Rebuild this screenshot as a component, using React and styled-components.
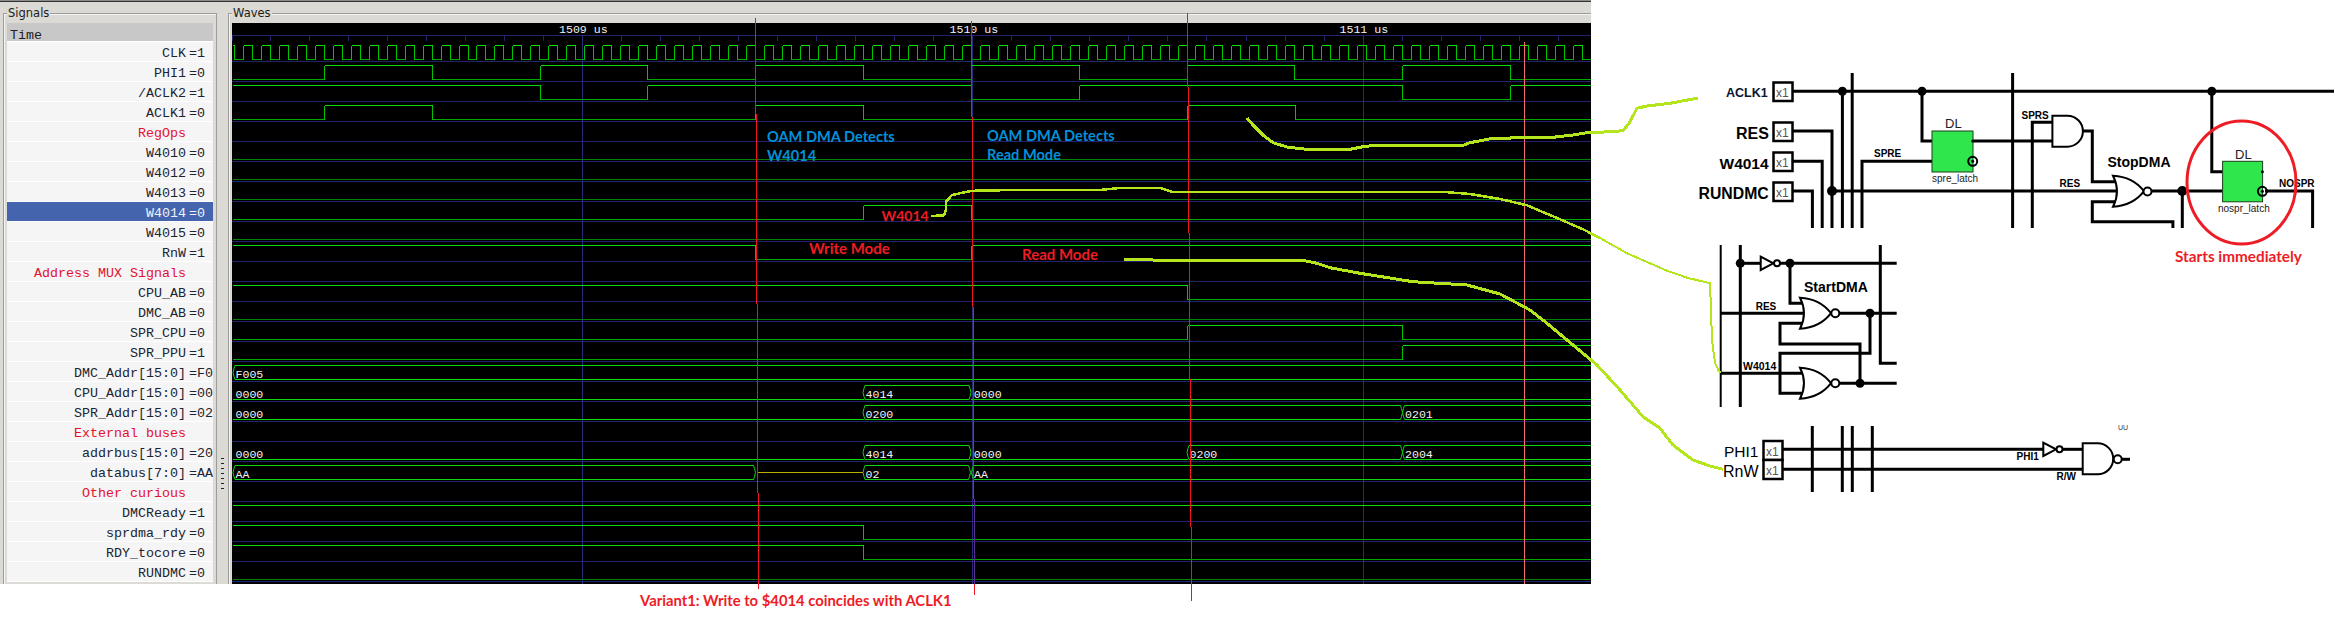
import React from "react";
import styled, { createGlobalStyle } from "styled-components";

const GlobalStyle = createGlobalStyle`
  html, body { margin: 0; padding: 0; background: #fff; }
  body { overflow: hidden; }
`;

/* ---------- signal list ---------- */

const signalRows = [
  { name: "CLK", value: "=1" },
  { name: "PHI1", value: "=0" },
  { name: "/ACLK2", value: "=1" },
  { name: "ACLK1", value: "=0" },
  { name: "RegOps", group: true },
  { name: "W4010", value: "=0" },
  { name: "W4012", value: "=0" },
  { name: "W4013", value: "=0" },
  { name: "W4014", value: "=0", selected: true },
  { name: "W4015", value: "=0" },
  { name: "RnW", value: "=1" },
  { name: "Address MUX Signals", group: true },
  { name: "CPU_AB", value: "=0" },
  { name: "DMC_AB", value: "=0" },
  { name: "SPR_CPU", value: "=0" },
  { name: "SPR_PPU", value: "=1" },
  { name: "DMC_Addr[15:0]", value: "=F0" },
  { name: "CPU_Addr[15:0]", value: "=00" },
  { name: "SPR_Addr[15:0]", value: "=02" },
  { name: "External buses", group: true },
  { name: "addrbus[15:0]", value: "=20" },
  { name: "databus[7:0]", value: "=AA" },
  { name: "Other curious", group: true },
  { name: "DMCReady", value: "=1" },
  { name: "sprdma_rdy", value: "=0" },
  { name: "RDY_tocore", value: "=0" },
  { name: "RUNDMC", value: "=0" },
];

/* ---------- wave data, x in page pixels ---------- */

const CANVAS_LEFT = 232;
const CANVAS_RIGHT = 1591;
const rises = [324.3, 540, 755.7, 971.4, 1187.1, 1402.8];
const falls = rises.map((x) => x + 107.85);

const clockEdges = [234.3];
for (let k = 0; k < 75; k++) {
  clockEdges.push(243.3 + 17.975 * k, 252.3 + 17.975 * k);
}

const bitRows = [
  { row: 0, start: 1, edges: clockEdges },
  { row: 1, start: 0, edges: rises.flatMap((x, i) => [x, falls[i]]) },
  { row: 2, start: 1, edges: [540, 647.9, 971.4, 1079.3, 1402.8, 1510.7] },
  { row: 3, start: 0, edges: [324.3, 432.2, 755.7, 863.6, 1187.1, 1295] },
  { row: 5, start: 0, edges: [] },
  { row: 6, start: 0, edges: [] },
  { row: 7, start: 0, edges: [] },
  { row: 8, start: 0, edges: [863.6, 971.4] },
  { row: 9, start: 0, edges: [] },
  { row: 10, start: 1, edges: [755.7, 971.4] },
  { row: 12, start: 1, edges: [1187.1] },
  { row: 13, start: 0, edges: [] },
  { row: 14, start: 0, edges: [1187.1, 1402.8] },
  { row: 15, start: 0, edges: [1402.8] },
  { row: 23, start: 1, edges: [] },
  { row: 24, start: 1, edges: [863.6] },
  { row: 25, start: 1, edges: [863.6] },
  { row: 26, start: 0, edges: [] },
];

const busRows = [
  { row: 16, parts: [{ from: 233, to: 1593, text: "F005", box: true }] },
  {
    row: 17,
    parts: [
      { from: 233, to: 864, text: "0000" },
      { from: 863, to: 971, text: "4014", box: true },
      { from: 971, to: 1591, text: "0000", textX: 973.8 },
    ],
  },
  {
    row: 18,
    parts: [
      { from: 233, to: 864, text: "0000" },
      { from: 863, to: 1402.5, text: "0200", box: true },
      { from: 1402.5, to: 1593, text: "0201", box: true },
    ],
  },
  {
    row: 20,
    parts: [
      { from: 233, to: 864, text: "0000" },
      { from: 863, to: 971, text: "4014", box: true },
      { from: 971, to: 1188, text: "0000", textX: 973.8 },
      { from: 1187, to: 1402.5, text: "0200", box: true },
      { from: 1402.5, to: 1593, text: "2004", box: true },
    ],
  },
  {
    row: 21,
    parts: [
      { from: 233, to: 755.5, text: "AA", box: true },
      { from: 863, to: 970.5, text: "02", box: true },
      { from: 971.5, to: 1593, text: "AA", box: true },
    ],
  },
];

const snap = (x) => Math.floor(x) + 0.5;
const highY = (row) => 45.5 + 20 * row;
const lowY = (row) => 59.5 + 20 * row;
const sepY = (row) => 61.5 + 20 * row;

const bitPaths = ({ row, start, edges }) => {
  const points = [CANVAS_LEFT, ...edges.filter((x) => x < CANVAS_RIGHT), CANVAS_RIGHT];
  let level = start;
  let high = "";
  let low = "";
  let vertical = "";
  for (let i = 0; i < points.length - 1; i++) {
    const a = snap(points[i]);
    const b = snap(points[i + 1]);
    if (level) high += `M${a} ${highY(row)}H${b}`;
    else low += `M${a} ${lowY(row)}H${b}`;
    if (i < points.length - 2) vertical += `M${b} ${highY(row)}V${lowY(row)}`;
    level = level ? 0 : 1;
  }
  return { high, low, vertical };
};

const busPath = (row, { from, to, box }) => {
  const hi = highY(row);
  const lo = lowY(row);
  if (!box) return `M${from} ${lo}H${to}`;
  const mid = (hi + lo) / 2;
  return (
    `M${from + 2} ${lo}L${from + 1} ${lo - 3}L${from} ${mid}L${from + 1} ${hi + 3}L${from + 2} ${hi}H${to - 2}` +
    `L${to - 1} ${hi + 3}L${to} ${mid}L${to - 1} ${lo - 3}L${to - 2} ${lo}H${from + 2}`
  );
};

const minorTicks = [CANVAS_LEFT + 0.5];
for (let k = 0; k < 34; k++) minorTicks.push(snap(270 + 39.04 * k));
const majorLines = [582.5, 972.5, 1363.5];
const timeLabels = [
  { x: 559, text: "1509 us" },
  { x: 949.5, text: "1510 us" },
  { x: 1339.5, text: "1511 us" },
];

/* ---------- styled parts ---------- */

const Page = styled.div`
  position: relative;
  display: flex;
  align-items: flex-start;
  width: 2335px;
  height: 620px;
  overflow: hidden;
  background: #fff;
`;

const AppWindow = styled.div`
  display: flex;
  flex: 0 0 1591px;
  box-sizing: border-box;
  height: 584px;
  padding-top: 12px;
  overflow: hidden;
  background: #dcdad5;
  border-top: 1px solid #8c8c8c;
  box-shadow: inset 0 1px 0 #333;
`;

const Frame = styled.section`
  position: relative;
  flex: ${(p) => p.$flex};
  box-sizing: border-box;
  height: 620px;
  margin-left: ${(p) => p.$left || 0};
  padding: 9px ${(p) => p.$right} 0 3px;
  border-top: 1px solid #9d9c9a;
  border-left: 1px solid #9d9c9a;
  border-right: ${(p) => (p.$closed ? "1px solid #9d9c9a" : "none")};
  box-shadow: inset 1px 1px 0 #f4f3f1;
`;

const FrameLabel = styled.span`
  position: absolute;
  top: -9px;
  left: 3px;
  padding: 0 1px;
  background: #dcdad5;
  color: #1c1c1c;
  font: 11.5px/16px "DejaVu Sans", sans-serif;
`;

const SignalList = styled.div`
  background: #f5f5f5;
  font: 13.33px/19px "Liberation Mono", monospace;
`;

const TimeHeader = styled.div`
  box-sizing: border-box;
  height: 19px;
  padding: 3px 0 0 3px;
  overflow: hidden;
  background: #c8c8c8;
  border-bottom: 1px solid #fff;
  color: #222;
`;

const SignalRow = styled.div`
  display: grid;
  grid-template-columns: 179px 3px 24px;
  box-sizing: border-box;
  height: 20px;
  padding-top: 2px;
  overflow: hidden;
  white-space: pre;
  background: ${(p) => (p.$selected ? "#4464ad" : "#f5f5f5")};
  border-bottom: 1px solid #fff;
  color: ${(p) => (p.$selected ? "#eef2fb" : "#1b2430")};
`;

const SignalName = styled.span`
  grid-column: 1;
  justify-self: end;
  color: ${(p) => (p.$group ? "#e2122d" : "inherit")};
`;

const SignalValue = styled.span`
  grid-column: 3;
`;

const Gutter = styled.div`
  flex: 0 0 11px;
  box-sizing: border-box;
  display: flex;
  justify-content: center;
  padding-top: 445px;
`;

const Grip = styled.div`
  width: 3px;
  height: 34px;
  background: repeating-linear-gradient(#222 0 1px, transparent 1px 5px);
`;

const WaveCanvas = styled.svg`
  display: block;
  background: #000;
`;

const Trace = styled.path`
  fill: none;
  stroke-width: 1px;
  shape-rendering: crispEdges;
  stroke: ${(p) => p.$tone};
`;

const BusTrace = styled.path`
  fill: none;
  stroke: #0cd80c;
  stroke-width: 1px;
`;

const WaveText = styled.text`
  fill: #f2f2f2;
  font: 11.6px "Liberation Mono", monospace;
`;

const Schematic = styled.svg`
  display: block;
  flex: 0 0 744px;
`;

const Wire = styled.path`
  fill: none;
  stroke: #000;
  stroke-width: ${(p) => p.$w || 3}px;
`;

const Gate = styled.path`
  fill: #fff;
  stroke: #000;
  stroke-width: 2px;
`;

const Bubble = styled.circle`
  fill: ${(p) => (p.$open ? "none" : "#fff")};
  stroke: #000;
  stroke-width: 2px;
`;

const Junction = styled.circle`
  fill: #000;
`;

const PortBox = styled.rect`
  fill: #fff;
  stroke: #000;
  stroke-width: 2.5px;
`;

const Latch = styled.rect`
  fill: #2fe64c;
  stroke: #1b3d1b;
  stroke-width: 1px;
`;

const Label = styled.text`
  fill: ${(p) => p.$color || "#000"};
  font-family: "Liberation Sans", Arial, sans-serif;
  font-size: ${(p) => p.$size}px;
  font-weight: ${(p) => (p.$bold ? 700 : 400)};
`;

const Overlay = styled.svg`
  position: absolute;
  top: 0;
  left: 0;
  pointer-events: none;
`;

const Marker = styled.path`
  fill: none;
  stroke: ${(p) => p.$tone || "#f0141e"};
  stroke-width: 1px;
  shape-rendering: crispEdges;
`;

const Scribble = styled.polyline`
  fill: none;
  stroke: #b5e61d;
  stroke-width: ${(p) => p.$w || 3}px;
  stroke-linejoin: round;
  shape-rendering: crispEdges;
`;

const Note = styled.text`
  fill: ${(p) => p.$color};
  font: 700 ${(p) => p.$size || 15}px Lato, "Open Sans", sans-serif;
`;

const Ring = styled.ellipse`
  fill: none;
  stroke: #ee1c25;
  stroke-width: 3px;
`;

/* ---------- schematic helpers ---------- */

const norShape = (x, y) =>
  `M${x} ${y}Q${x + 20} ${y + 1} ${x + 31} ${y + 15.5}Q${x + 20} ${y + 30} ${x} ${y + 31}Q${x + 8} ${y + 15.5} ${x} ${y}Z`;
const andShape = (x, y) => `M${x} ${y}H${x + 15}A15.5 15.5 0 0 1 ${x + 15} ${y + 31}H${x}Z`;

const Port = ({ x, y, h = 18.5 }) => (
  <>
    <PortBox x={x} y={y} width={19} height={h} />
    <Label x={x + 2.5} y={y + h - 4} $size={12} $color="#555">
      x1
    </Label>
  </>
);

const topWires = [
  "M1792 91.3H2334",
  "M1852.2 73V228",
  "M2012.6 73V228",
  "M1842.4 91V228",
  "M1792 131H1832V228",
  "M1792 161.3H1822.2V228",
  "M1792 191H1812.4V228",
  "M1862 228V161.3H1932",
  "M1922 91V141H1932",
  "M1972 141H2052.4",
  "M2032.3 228V122.3H2052.4",
  "M2083 131H2092.3V181.7H2116",
  "M1832 191H2117",
  "M2152 191H2222.6",
  "M2116 201.7H2092.3V221.7H2172.9V228",
  "M2182.3 191V228",
  "M2211.8 91V171.7H2222.6",
  "M2265 191H2312.6V228",
];

const midWires = [
  "M1740.3 245V407",
  "M1740.3 263.3H1761",
  "M1780 263.3H1896.7",
  "M1790 263.3V303.3H1802",
  "M1720.7 313.3H1804",
  "M1840 313.3H1896.7",
  "M1802 323.3H1780V344H1860V383.3",
  "M1870 313.3V353.3H1780V393.3H1802",
  "M1720.7 373.3H1804",
  "M1840 383.3H1896.7",
  "M1880.3 245V363.3H1896.7",
];

const lowWires = [
  "M1782.7 449.3H2044",
  "M2062 449.3H2082.7",
  "M1782.7 469.3H2082.7",
  "M1812.3 426V492",
  "M1842.3 426V492",
  "M1852.3 426V492",
  "M1872.3 426V492",
  "M2122 459.3H2130",
];

const scribbleA = [
  [1247, 118], [1253, 125], [1263, 135], [1273, 142.7], [1288, 147.3], [1307, 149.3], [1350, 149.3],
  [1363, 146.7], [1375, 145.3], [1463, 145.3], [1470, 142.7], [1493, 138.3], [1553, 137.3], [1573, 135],
  [1587, 132.7], [1600, 132.3], [1623, 130.7], [1629, 123.3], [1637, 108.3], [1647, 106], [1670, 103.3], [1698, 98],
];
const scribbleB = [
  [931, 216], [944, 215.3], [946, 210], [946, 201.7], [952, 195], [971, 191], [982, 190.3], [1100, 190],
  [1120, 188], [1160, 188], [1173, 192], [1445, 192], [1470, 194], [1500, 199], [1527, 205.3], [1560, 219.3],
  [1583, 229.3], [1600, 238],
];
const scribbleBEnd = [
  [1600, 238], [1627, 253.3], [1650, 263.3], [1667, 270.7], [1687, 277.7], [1710, 283.3], [1711, 310],
  [1712, 340], [1715, 363], [1719, 371.3], [1721, 372],
];
const scribbleC = [
  [1124, 259.3], [1153, 260], [1303, 260.3], [1317, 263.3], [1330, 267.7], [1360, 273.3], [1413, 281.7],
  [1467, 285], [1500, 294], [1530, 310], [1547, 323.3], [1573, 345], [1597, 365], [1620, 390], [1643, 416.7],
  [1660, 428.3], [1673, 445], [1693, 460], [1710, 466], [1723, 469.3],
];

const toPoints = (list) => list.map((p) => p.join(",")).join(" ");

export default function App() {
  return (
    <Page>
      <GlobalStyle />
      <AppWindow>
        <Frame $flex="0 0 214px" $left="3px" $right="3px" $closed>
          <FrameLabel>Signals</FrameLabel>
          <SignalList>
            <TimeHeader>Time</TimeHeader>
            {signalRows.map((s) => (
              <SignalRow key={s.name} $selected={s.selected}>
                <SignalName $group={s.group}>{s.name}</SignalName>
                {s.value && <SignalValue>{s.value}</SignalValue>}
              </SignalRow>
            ))}
          </SignalList>
        </Frame>
        <Gutter>
          <Grip />
        </Gutter>
        <Frame $flex="1 1 auto" $right="0">
          <FrameLabel>Waves</FrameLabel>
          <WaveCanvas width={1359} height={561} viewBox="232 23 1359 561">
            <Trace $tone="#22226e" d={`M232 35.5H1591`} />
            <Trace $tone="#22226e" d={minorTicks.map((x) => `M${x} 36V41`).join("")} />
            {signalRows.map((_, row) => (
              <Trace key={row} $tone="#22226e" d={`M232 ${sepY(row)}H1591`} />
            ))}
            <Trace $tone="#2a2a7c" d={majorLines.map((x) => `M${x} 35V584`).join("")} />
            {timeLabels.map((t) => (
              <WaveText key={t.text} x={t.x} y={33}>
                {t.text}
              </WaveText>
            ))}
            {bitRows.map((r) => {
              const { high, low, vertical } = bitPaths(r);
              return (
                <g key={r.row}>
                  <Trace $tone="#0bdc0b" d={high} />
                  <Trace $tone={r.row === 0 || r.edges.length ? "#00a800" : "#067f06"} d={low} />
                  <Trace $tone="#00c400" d={vertical} />
                </g>
              );
            })}
            {busRows.map((r) =>
              r.parts.map((part) => (
                <g key={`${r.row}-${part.from}`}>
                  <BusTrace d={busPath(r.row, part)} />
                  <WaveText x={part.textX || part.from + 2.5} y={58 + 20 * r.row}>
                    {part.text}
                  </WaveText>
                </g>
              ))
            )}
            <Trace $tone="#b8b000" d="M757 472.5H863" />
          </WaveCanvas>
        </Frame>
      </AppWindow>

      <Schematic width={744} height={620} viewBox="1591 0 744 620">
        {topWires.map((d) => (
          <Wire key={d} d={d} />
        ))}
        <Port x={1773.5} y={82.5} />
        <Port x={1773.5} y={122.5} />
        <Port x={1773.5} y={152.5} />
        <Port x={1773.5} y={182.5} />
        <Label x={1726} y={96.5} $size={12.5} $bold $color="#0a1530">ACLK1</Label>
        <Label x={1736} y={138.5} $size={16} $bold>RES</Label>
        <Label x={1719.5} y={169} $size={15.5} $bold>W4014</Label>
        <Label x={1698.5} y={198.5} $size={15.8} $bold>RUNDMC</Label>
        <Junction cx={1842.4} cy={91.3} r={4.5} />
        <Junction cx={1922} cy={91.3} r={4.5} />
        <Junction cx={2211.8} cy={91.3} r={4.5} />
        <Junction cx={1832} cy={191} r={5} />
        <Junction cx={2182.3} cy={191} r={5} />

        <Latch x={1932} y={131} width={41} height={41} />
        <Label x={1945} y={128} $size={13} $color="#222">DL</Label>
        <Label x={1932} y={182} $size={10} $color="#222">spre_latch</Label>
        <Junction cx={1972.7} cy={141} r={1.5} />
        <Bubble $open cx={1972.7} cy={161.3} r={4.5} />
        <Junction cx={1972.7} cy={161.3} r={1.5} />
        <Label x={1874} y={157} $size={10} $bold>SPRE</Label>
        <Label x={2021.5} y={119} $size={10} $bold>SPRS</Label>
        <Gate d={andShape(2052.4, 115.7)} />

        <Label x={2107.5} y={166.5} $size={14} $bold>StopDMA</Label>
        <Label x={2059.5} y={187} $size={10} $bold>RES</Label>
        <Gate d={norShape(2113, 175.7)} />
        <Bubble cx={2147.5} cy={191.5} r={4} />

        <Latch x={2222.6} y={161.3} width={40} height={40.5} />
        <Label x={2235} y={159} $size={13} $color="#222">DL</Label>
        <Label x={2218} y={212} $size={10} $color="#222">nospr_latch</Label>
        <Junction cx={2262.4} cy={171.7} r={1.5} />
        <Bubble $open cx={2262.4} cy={191.3} r={4.5} />
        <Junction cx={2262.4} cy={191.3} r={1.5} />
        <Label x={2279} y={186.5} $size={10} $bold>NOSPR</Label>

        <Wire $w={2} d="M1720.7 245V407" />
        {midWires.map((d) => (
          <Wire key={d} d={d} />
        ))}
        <Gate d="M1760.7 256.7L1773.3 263.3L1760.7 270Z" />
        <Bubble cx={1777} cy={263.3} r={3} />
        <Junction cx={1740.3} cy={263.3} r={4.5} />
        <Junction cx={1790} cy={263.3} r={4.5} />
        <Label x={1804} y={291.7} $size={14} $bold>StartDMA</Label>
        <Label x={1755.7} y={310} $size={10} $bold>RES</Label>
        <Gate d={norShape(1800, 297.7)} />
        <Bubble cx={1835.3} cy={313.3} r={4} />
        <Junction cx={1870} cy={313.3} r={4.5} />
        <Label x={1743} y={370} $size={10.5} $bold>W4014</Label>
        <Gate d={norShape(1800, 367.7)} />
        <Bubble cx={1835.3} cy={383.3} r={4} />
        <Junction cx={1860} cy={383.3} r={4.5} />

        {lowWires.map((d) => (
          <Wire key={d} d={d} />
        ))}
        <Port x={1763.5} y={441} h={19} />
        <Port x={1763.5} y={460} h={19} />
        <Label x={1724} y={457.3} $size={15.5}>PHI1</Label>
        <Label x={1723} y={477.3} $size={16}>RnW</Label>
        <Gate d="M2043.3 442.7L2056 449.3L2043.3 456Z" />
        <Bubble cx={2059.5} cy={449.3} r={3} />
        <Label x={2016.5} y={460} $size={10} $bold>PHI1</Label>
        <Label x={2056.5} y={480} $size={10} $bold>R/W</Label>
        <Gate d={andShape(2082.7, 443.3)} />
        <Bubble cx={2117.7} cy={459.3} r={4} />
        <Label x={2118} y={430} $size={7} $color="#333">UU</Label>
      </Schematic>

      <Overlay width={2335} height={620} viewBox="0 0 2335 620">
        <Marker d="M755.5 18V114M756.5 114V304M757.5 304V493M758.5 493V589" />
        <Marker d="M971.5 21V117M972.5 117V307M973.5 307V499" />
        <Marker $tone="#5b2d8c" d="M974.5 499V584" />
        <Marker d="M974.5 584V595" />
        <Marker d="M1187.5 13V87M1188.5 87V233M1189.5 233V379M1190.5 379V527M1191.5 527V601" />
        <Marker $tone="#f26d6d" d="M1524.5 42V584" />

        <Scribble points={toPoints(scribbleA)} />
        <Scribble points={toPoints(scribbleB)} $w={2.5} />
        <Scribble points={toPoints(scribbleBEnd)} $w={2} />
        <Scribble points={toPoints(scribbleC)} />

        <Note x={767} y={142} $size={14.6} $color="#0090dc">OAM DMA Detects</Note>
        <Note x={767} y={161} $size={14.6} $color="#0090dc">W4014</Note>
        <Note x={987} y={141} $size={14.6} $color="#0090dc">OAM DMA Detects</Note>
        <Note x={987} y={160} $size={14.6} $color="#0090dc">Read Mode</Note>
        <Note x={881.5} y={221} $size={14} $color="#ee1c25">W4014</Note>
        <Note x={809} y={254} $color="#ee1c25">Write Mode</Note>
        <Note x={1022} y={260} $color="#ee1c25">Read Mode</Note>
        <Note x={640} y={606} $size={14.8} $color="#ee1c25">Variant1: Write to $4014 coincides with ACLK1</Note>
        <Note x={2175} y={262} $size={15.3} $color="#ee1c25">Starts immediately</Note>
        <Ring cx={2241.5} cy={182.5} rx={54.5} ry={61.5} />
      </Overlay>
    </Page>
  );
}
